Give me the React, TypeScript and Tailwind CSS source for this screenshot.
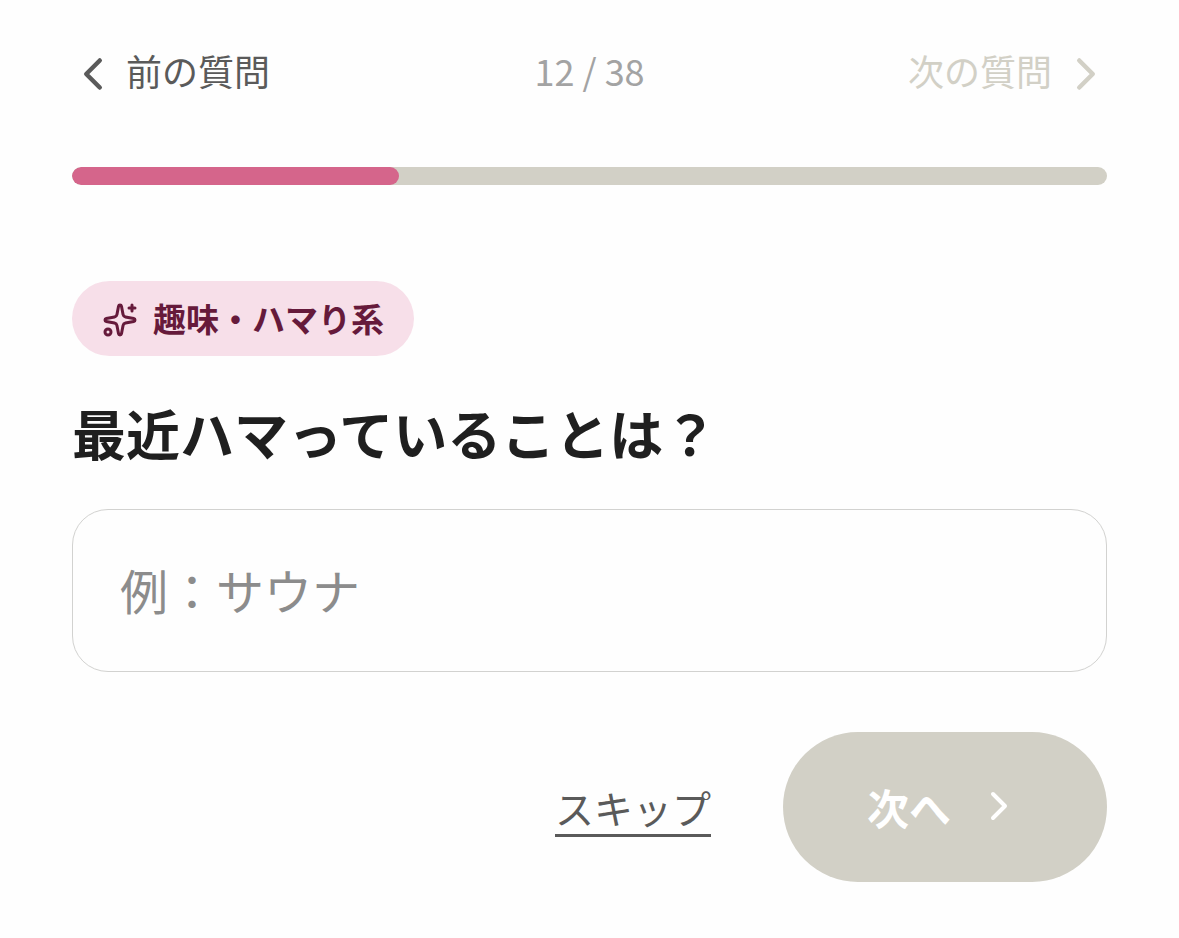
import { ChevronLeft, ChevronRight, Sparkles } from 'lucide-react'
import { useState } from 'react'


const TOTAL_QUESTIONS = 38

const question = {
    index: 12,
    category: '趣味・ハマり系',
    title: '最近ハマっていることは？',
    placeholder: '例：サウナ',
}


function QuestionNav() {
    return <nav className="flex h-[54px] items-center justify-between text-[36px] leading-[54px]">
        <button className="-ml-1.5 flex flex-1 items-center gap-1.5 text-[#5a5a5a]">
            <ChevronLeft size={54} />
            <span className="pb-2">前の質問</span>
        </button>
        <span className="pb-2 text-[#a3a3a3]">{question.index} / {TOTAL_QUESTIONS}</span>
        <button disabled className="-mr-1.5 flex flex-1 items-center justify-end gap-[7px] text-[#d2d0c6]">
            <span className="pb-2">次の質問</span>
            <ChevronRight size={54} />
        </button>
    </nav>
}


function ProgressBar() {
    const percent = question.index / TOTAL_QUESTIONS * 100

    return <div className="mt-[66px] h-[18px] overflow-hidden rounded-full bg-[#d2d0c6]">
        <div className="h-full rounded-full bg-[#d5658b]" style={{ width: `${percent}%` }} />
    </div>
}


export default function App() {
    const [answer, setAnswer] = useState('')

    return <main lang="ja" className="h-[938px] bg-[#fefefe] px-[72px] pt-[47px] font-['Noto_Sans_CJK_JP',sans-serif]">
        <QuestionNav />
        <ProgressBar />

        <div className="mt-24 flex h-[75px] w-fit items-center gap-[15px] rounded-full bg-[#f7dfe9] px-[30px] text-[33px] font-bold text-[#661a3b]">
            <Sparkles size={36} className="mt-0.5" />
            {question.category}
        </div>

        <h1 className="mt-9 text-[54px] leading-[81px] font-bold text-[#1f1f1f]">
            {question.title}
        </h1>

        <input
            value={answer}
            onChange={e => setAnswer(e.target.value)}
            placeholder={question.placeholder}
            className="mt-9 block h-[163px] w-full rounded-[36px] border border-[#d2d2d0] px-[47px] pb-[3px] text-[48px] text-[#1f1f1f] outline-none placeholder:text-[#8c8c8c]"
        />

        <div className="mt-[60px] flex items-center justify-end gap-[72px]">
            <button className="border-b-3 border-[#5a5a5a] pt-[3px] text-[39px] leading-[54px] text-[#5a5a5a]">
                スキップ
            </button>
            <button disabled={!answer} className="flex h-[150px] items-center gap-6 rounded-full bg-[#d2d0c6] px-[84px] pb-0.5 text-[42px] font-bold text-white">
                次へ
                <ChevronRight size={48} />
            </button>
        </div>
    </main>
}
